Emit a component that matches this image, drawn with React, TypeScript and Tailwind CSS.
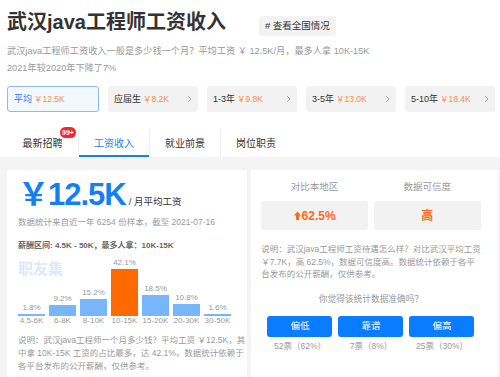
import { clsx } from 'clsx';

const cards = [
    { label: '平均', value: '￥12.5K', active: true },
    { label: '应届生', value: '￥8.2K' },
    { label: '1-3年', value: '￥9.8K' },
    { label: '3-5年', value: '￥13.0K' },
    { label: '5-10年', value: '￥16.4K' },
];

const tabs = ['最新招聘', '工资收入', '就业前景', '岗位职责'];

const bars = [
    { range: '4.5-6K', pct: 1.8 },
    { range: '6-8K', pct: 9.2 },
    { range: '8-10K', pct: 15.2 },
    { range: '10-15K', pct: 42.1, hot: true },
    { range: '15-20K', pct: 18.5 },
    { range: '20-30K', pct: 10.8 },
    { range: '30-50K', pct: 1.6 },
];

const votes = [
    { label: '偏低', count: '52票（62%）' },
    { label: '靠谱', count: '7票（8%）' },
    { label: '偏高', count: '25票（30%）' },
];

function Chevron() {
    return (
        <svg width="5" height="8" viewBox="0 0 5 8" className="ml-auto">
            <path d="M1 1l3 3-3 3" fill="none" stroke="#aaa" strokeWidth="1" />
        </svg>
    );
}

function ArrowUp() {
    return (
        <svg width="7" height="9" viewBox="0 0 7 9" className="mr-[1px]">
            <path d="M3.5 0.5L7 4.5H5V9H2V4.5H0z" fill="#ff6a1a" />
        </svg>
    );
}

function SalaryCard({ label, value, active }: { label: string; value: string; active?: boolean }) {
    return (
        <div
            className={clsx(
                'flex-1 h-[26px] rounded-[3px] flex items-center px-[6px]',
                active ? 'border border-[#8ab9f3] bg-[#f3f8ff]' : 'bg-[#f2f2f2]'
            )}
        >
            <span className={clsx('text-[9px] leading-none', active ? 'text-[#1a7cf5]' : 'text-[#333]')}>{label}</span>
            <span className="ml-[2px] text-[8.5px] leading-none text-[#ff8a45]">{value}</span>
            {!active && <Chevron />}
        </div>
    );
}

function SalaryPanel() {
    return (
        <div className="flex-1 bg-white pl-[11px] pr-[2px] pt-[7px]">
            <div className="flex items-baseline">
                <span className="text-[31px] leading-[36px] font-bold tracking-[-1px] text-[#147ff5]">￥12.5K</span>
                <span className="ml-[3px] text-[9.5px] text-[#333]">/ 月平均工资</span>
            </div>
            <p className="mt-[2px] text-[8.5px] leading-[14px] text-[#999]">数据统计来自近一年 6254 份样本，截至 2021-07-16</p>
            <p className="mt-[10px] text-[8px] leading-[14px] font-bold text-[#666]">薪酬区间: 4.5K - 50K，最多人拿：10K-15K</p>

            <div className="relative">
                <span className="absolute left-0 top-[8px] text-[15px] leading-none font-bold text-[#dce9fb]">职友集</span>
                <div className="relative flex items-end gap-[4px] h-[63px]">
                    {bars.map((b) => (
                        <div key={b.range} className="w-[27px] flex flex-col items-center">
                            <span className="mb-[1px] text-[8px] leading-[10px] text-[#999]">{b.pct}%</span>
                            <div
                                className={clsx('w-full', b.hot ? 'bg-[#ff6a00]' : 'bg-[#78b6fb]')}
                                style={{ height: Math.round(b.pct * 1.1 + 0.5) }}
                            />
                        </div>
                    ))}
                </div>
                <div className="flex gap-[4px]">
                    {bars.map((b) => (
                        <span key={b.range} className="w-[27px] text-center text-[8px] leading-[10px] text-[#999]">
                            {b.range}
                        </span>
                    ))}
                </div>
            </div>

            <p className="mt-[8px] text-[8.5px] leading-[13px] text-[#999] whitespace-nowrap">
                说明：武汉java工程师一个月多少钱？平均工资 ￥12.5K，其
                <br />
                中拿 10K-15K 工资的占比最多，达 42.1%，数据统计依赖于
                <br />
                各平台发布的公开薪酬，仅供参考。
            </p>
        </div>
    );
}

function ComparePanel() {
    return (
        <div className="flex-1 bg-white pl-[10px] pr-[17px] pt-[10px]">
            <div className="grid grid-cols-2 gap-x-[6px]">
                <div className="text-center text-[9.5px] leading-[14px] text-[#999]">对比本地区</div>
                <div className="text-center text-[9.5px] leading-[14px] text-[#999]">数据可信度</div>
                <div className="mt-[7px] h-[29px] rounded-[3px] bg-[#f2f2f2] flex items-center justify-center text-[12px] font-bold text-[#ff6a1a]">
                    <ArrowUp />
                    62.5%
                </div>
                <div className="mt-[7px] h-[29px] rounded-[3px] bg-[#f2f2f2] flex items-center justify-center text-[12px] font-bold text-[#ff6a1a]">
                    高
                </div>
            </div>

            <p className="mt-[13px] text-[8.5px] leading-[12.5px] text-[#999] whitespace-nowrap">
                说明：武汉java工程师工资待遇怎么样？对比武汉平均工资
                <br />
                ￥7.7K，高 62.5%，数据可信度高。数据统计依赖于各平
                <br />
                台发布的公开薪酬，仅供参考。
            </p>

            <p className="mt-[11px] text-center text-[8.7px] leading-[14px] text-[#999]">你觉得该统计数据准确吗？</p>

            <div className="mt-[10px] flex justify-center gap-[6px]">
                {votes.map((v) => (
                    <div key={v.label} className="w-[65px] flex flex-col items-center">
                        <button className="w-full h-[21px] rounded-[3px] bg-[#0a7cff] text-white text-[9.5px]">{v.label}</button>
                        <span className="mt-[3px] text-[8.5px] leading-[12px] text-[#999]">{v.count}</span>
                    </div>
                ))}
            </div>
        </div>
    );
}

export default function App() {
    return (
        <div className="w-[500px] h-[377px] overflow-hidden flex flex-col bg-white text-[#333] font-['Liberation_Sans','Noto_Sans_CJK_SC',sans-serif]">
            <div className="pl-[7px] pr-[5px] pt-[8px]">
                <div className="flex items-end">
                    <h1 className="text-[20px] leading-[28px] font-bold text-[#333]">武汉java工程师工资收入</h1>
                    <span className="ml-[33px] h-[20px] px-[6px] flex items-center rounded-[3px] bg-[#f3f3f3] text-[9.5px] text-[#333]">
                        # 查看全国情况
                    </span>
                </div>
                <div className="mt-[7px] text-[9.2px] leading-[16.5px] text-[#999]">
                    <p>武汉java工程师工资收入一般是多少钱一个月？平均工资 ￥ 12.5K/月，最多人拿 10K-15K</p>
                    <p>2021年较2020年下降了7%</p>
                </div>
                <div className="mt-[10px] flex gap-[9px]">
                    {cards.map((c) => (
                        <SalaryCard key={c.label} {...c} />
                    ))}
                </div>
                <div className="mt-[17px] flex h-[28px]">
                    {tabs.map((t, i) => (
                        <div
                            key={t}
                            className={clsx(
                                'relative w-[71px] flex items-center justify-center text-[10px]',
                                i > 0 && 'border-l border-[#eee]',
                                i === 1 ? 'text-[#1a7cf5]' : 'text-[#333]'
                            )}
                        >
                            {t}
                            {i === 0 && (
                                <span className="absolute left-[53px] top-[-2px] h-[11px] px-[2px] rounded-full bg-[#f22] text-white text-[7px] leading-[11px] font-bold">
                                    99+
                                </span>
                            )}
                            {i === 1 && <span className="absolute left-0 right-0 bottom-0 h-[2px] bg-[#1a7cf5]" />}
                        </div>
                    ))}
                </div>
            </div>
            <div className="flex-1 flex gap-[4px] bg-[#f4f4f4] pl-[7px] pr-[5px] pt-[13px]">
                <SalaryPanel />
                <ComparePanel />
            </div>
        </div>
    );
}
